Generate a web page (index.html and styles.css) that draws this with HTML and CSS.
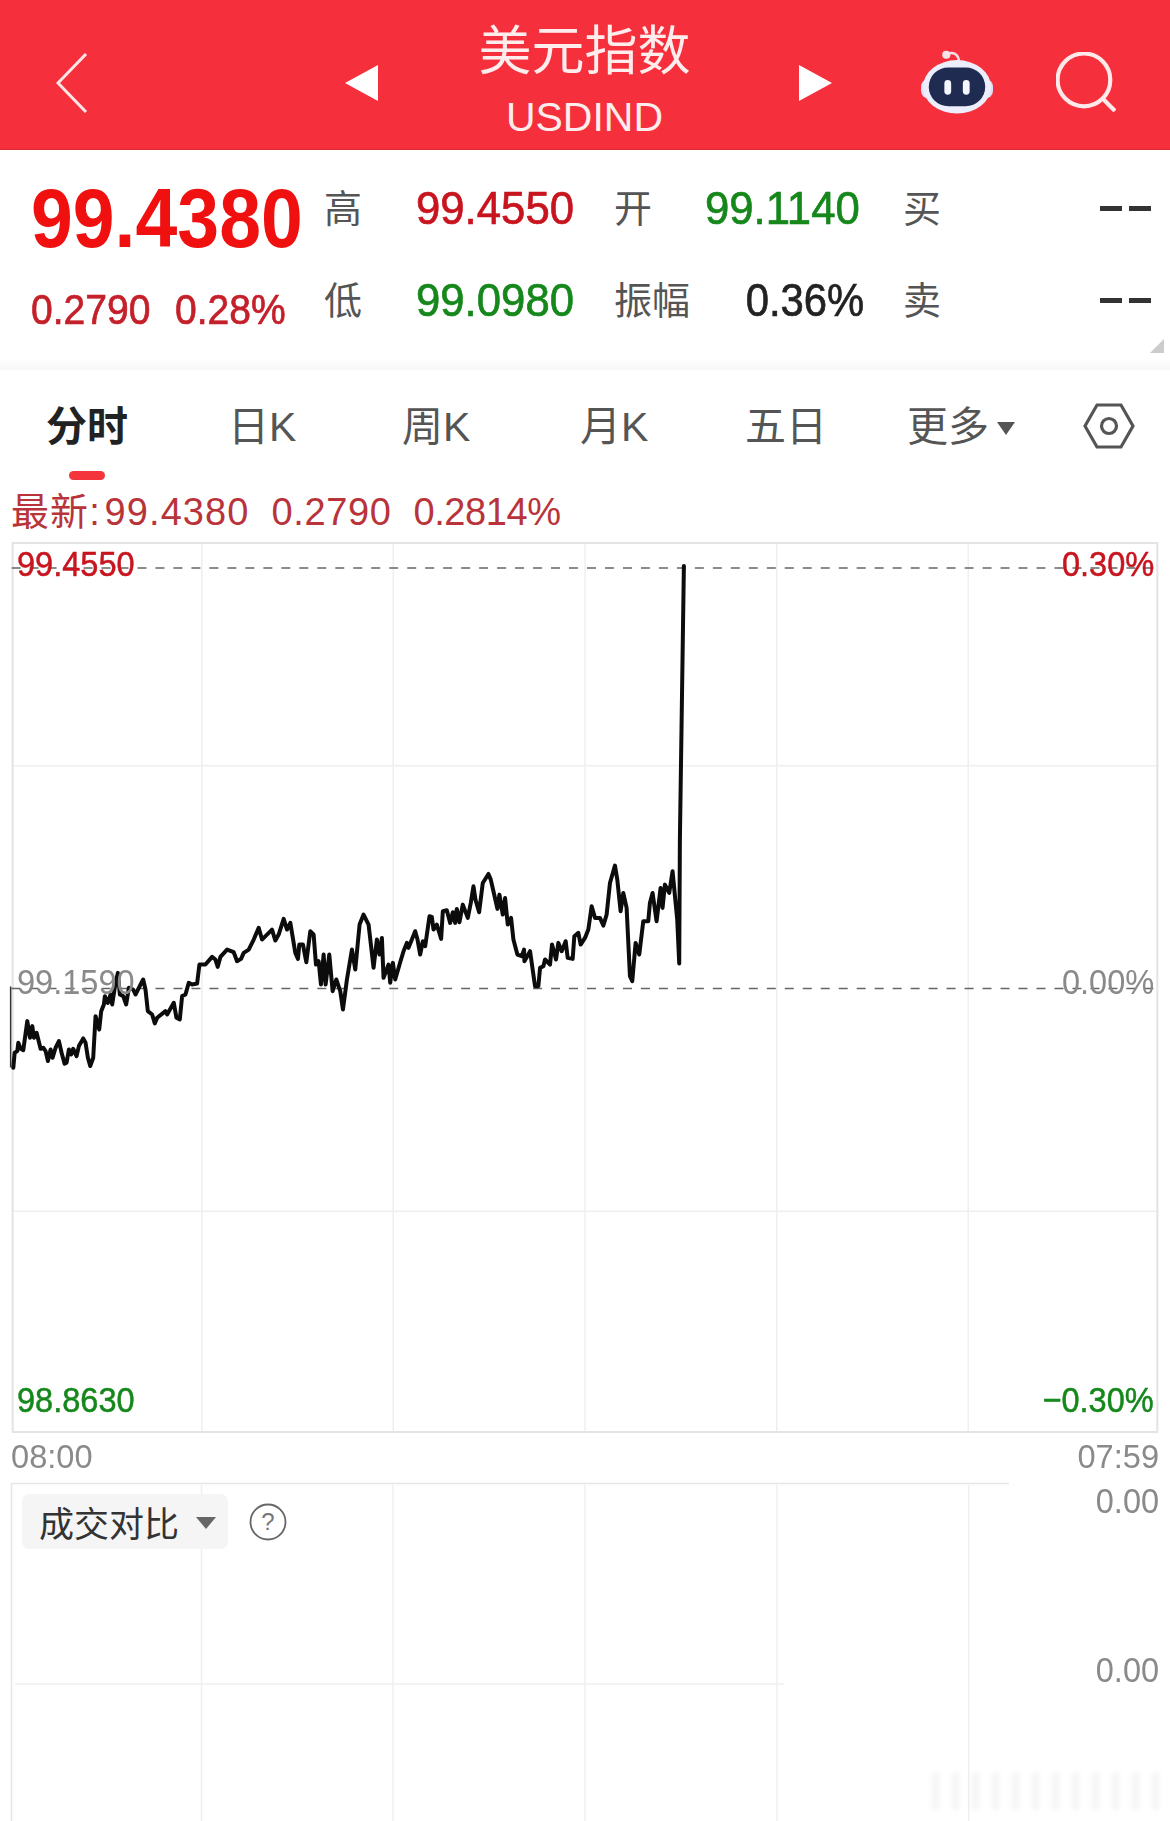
FILE: index.html
```html
<!DOCTYPE html>
<html lang="zh-CN">
<head>
<meta charset="utf-8">
<title>美元指数 USDIND</title>
<link rel="stylesheet" href="styles.css">
</head>
<body>
<div class="page">
  <header class="topbar">
    <svg class="back" viewBox="0 0 32 60"><path d="M30 1 2 30l28 29" /></svg>
    <span class="tri tri-l"></span>
    <div class="title">
      <div class="title-cn">美元指数</div>
      <div class="title-en">USDIND</div>
    </div>
    <span class="tri tri-r"></span>
    <svg class="robot" viewBox="0 0 74 66">
      <path class="robot-ant" d="M27 4c6-2 11 0 12 7"/>
      <circle class="robot-ball" cx="26" cy="5" r="4.2"/>
      <rect class="robot-ear" x="0" y="30" width="74" height="20" rx="8"/>
      <ellipse class="robot-head" cx="37" cy="38" rx="35" ry="27.5"/>
      <rect class="robot-face" x="8" y="18" width="58" height="40" rx="20"/>
      <rect class="robot-eye" x="24" y="31" width="7" height="15" rx="3.5"/>
      <rect class="robot-eye" x="43" y="31" width="7" height="15" rx="3.5"/>
    </svg>
    <svg class="search" viewBox="0 0 58 58"><circle cx="27" cy="27" r="25.5"/><path d="M46 46l11 11"/></svg>
  </header>

  <section class="quote">
    <div class="quote-main">
      <div class="price"><span class="cond-price">99.4380</span></div>
      <div class="change"><span class="cond-chg chg-a">0.2790</span><span class="cond-chg">0.28%</span></div>
    </div>
    <div class="quote-grid">
      <span class="q-lab">高</span><span class="q-val up"><span class="cond">99.4550</span></span>
      <span class="q-lab">开</span><span class="q-val down"><span class="cond">99.1140</span></span>
      <span class="q-lab">买</span><span class="q-dash"><i></i><i></i></span>
      <span class="q-lab">低</span><span class="q-val down"><span class="cond">99.0980</span></span>
      <span class="q-lab">振幅</span><span class="q-val dark q-amp"><span class="cond cond-r">0.36%</span></span>
      <span class="q-lab">卖</span><span class="q-dash"><i></i><i></i></span>
    </div>
    <span class="corner"></span>
  </section>
  <div class="stripe"></div>

  <nav class="tabs">
    <div class="tab tab-on">分时<span class="tab-bar"></span></div>
    <div class="tab">日K</div>
    <div class="tab">周K</div>
    <div class="tab">月K</div>
    <div class="tab">五日</div>
    <div class="tab tab-more">更多<span class="more-arrow"></span></div>
    <svg class="hex" viewBox="0 0 52 46"><path d="M14 2h24l12 21-12 21H14L2 23z"/><circle cx="26" cy="23" r="7.5"/></svg>
  </nav>

  <div class="latest"><span class="latest-a">最新: 99.4380</span><span>0.2790</span><span class="latest-c">0.2814%</span></div>

  <div class="chart">
    <svg class="chart-svg" viewBox="11 542 1148 892">
      <g class="grid">
        <path d="M201.5 542V1433M393 542V1433M585 542V1433M777 542V1433M968.7 542V1433"/>
        <path d="M11 766H1159M11 1212H1159"/>
      </g>
      <rect class="frame" x="12" y="543" width="1146" height="890"/>
      <path class="dash" d="M11 568H1159M11 989H1159"/>
      <path class="open-tick" d="M10 987V1068"/>
      <g transform="translate(0 840) scale(.33333)">
        <polyline class="price-line" points="38,685 42,640 50,635 53,610 60,628 68,632 80,545 88,595 95,560 100,595 108,580 120,628 128,625 135,635 142,665 150,630 156,655 165,625 175,605 183,640 192,673 198,670 205,630 212,645 218,628 228,650 235,620 248,597 255,610 262,655 269,680 278,655 285,530 296,570 302,515 310,495 313,470 322,490 330,465 335,495 345,430 352,400 358,465 368,470 377,495 385,445 398,450 405,465 415,445 428,420 435,450 442,515 455,525 463,552 470,535 495,515 500,525 520,490 528,535 538,540 545,470 555,465 565,430 575,435 590,432 597,375 615,375 635,352 645,360 652,382 660,352 680,330 700,338 710,365 722,358 730,340 745,330 760,300 775,265 785,300 800,285 815,270 825,303 835,285 850,238 860,270 870,250 885,340 893,358 897,315 908,315 918,368 930,275 940,285 947,375 955,365 962,435 970,345 976,435 987,345 997,455 1008,420 1020,455 1028,510 1040,420 1055,330 1065,390 1078,255 1090,225 1105,255 1120,385 1130,300 1138,345 1145,295 1150,415 1165,375 1170,430 1178,370 1185,420 1200,368 1210,335 1220,310 1225,325 1235,300 1245,275 1252,300 1260,345 1268,305 1275,320 1288,230 1295,232 1300,270 1310,255 1323,298 1328,215 1340,212 1350,250 1358,218 1365,250 1370,208 1378,248 1388,195 1403,235 1412,190 1420,140 1426,180 1437,218 1448,130 1465,103 1472,120 1480,155 1492,208 1498,165 1508,225 1515,175 1523,255 1533,235 1540,300 1552,345 1565,350 1572,330 1573,365 1590,335 1605,440 1615,440 1620,385 1630,380 1635,360 1650,375 1656,315 1668,360 1675,310 1685,335 1697,305 1703,355 1718,358 1723,290 1735,280 1742,315 1755,295 1765,270 1775,200 1785,235 1800,235 1810,258 1820,225 1830,130 1845,78 1852,120 1862,215 1870,160 1880,205 1890,410 1897,425 1907,310 1918,345 1930,245 1945,245 1950,190 1958,160 1970,245 1982,145 1988,205 1995,135 2008,160 2018,95 2032,240 2038,372 2040,0 2052,-822"/>
      </g>
    </svg>
    <span class="lab lab-l lab-top up"><span class="cond">99.4550</span></span>
    <span class="lab lab-r lab-top up"><span class="cond cond-r">0.30%</span></span>
    <span class="lab lab-l lab-mid gray"><span class="cond">99.1590</span></span>
    <span class="lab lab-r lab-mid gray"><span class="cond cond-r">0.00%</span></span>
    <span class="lab lab-l lab-bot down"><span class="cond">98.8630</span></span>
    <span class="lab lab-r lab-bot down"><span class="cond cond-r">−0.30%</span></span>
  </div>

  <div class="axis"><span class="cond-axis">08:00</span><span class="cond-axis cond-r">07:59</span></div>

  <div class="volume">
    <svg class="chart-svg" viewBox="11 1483 1148 338">
      <g class="grid">
        <path d="M201.5 1485V1821M393 1485V1821M585 1485V1821M777 1485V1821M968.7 1485V1821"/>
        <path d="M15 1684H784"/>
      </g>
      <path class="frame-open" d="M1009 1483.5H11.5V1821"/>
    </svg>
    <div class="vol-head">
      <div class="pill">成交对比<span class="pill-arrow"></span></div>
      <svg class="help" viewBox="0 0 38 38"><circle cx="19" cy="19" r="17.5"/><text x="19" y="27" text-anchor="middle">?</text></svg>
    </div>
    <span class="lab lab-r vol-a gray"><span class="cond cond-r">0.00</span></span>
    <span class="lab lab-r vol-b gray"><span class="cond cond-r">0.00</span></span>
    <div class="mark"></div>
  </div>
</div>
</body>
</html>
```

FILE: styles.css
```css
* { box-sizing: border-box; }
html, body { margin: 0; padding: 0; background: #fff; }
body { font-family: "Liberation Sans", "Noto Sans CJK SC", sans-serif; }
.page { width: 1170px; height: 1821px; overflow: hidden; }

.topbar { height: 150px; background: #f5303c; border-bottom: 1px solid #d92a36; display: flex; align-items: center; padding-left: 56px; color: #fff; }
.back { width: 32px; height: 60px; margin-top: 16px; fill: none; stroke: #fde6e6; stroke-width: 3; }
.tri { width: 0; height: 0; border-top: 18.5px solid transparent; border-bottom: 18.5px solid transparent; margin-top: 16px; }
.tri-l { margin-left: 257px; border-right: 33px solid #fff; }
.tri-r { margin-left: 8px; border-left: 33px solid #fff; }
.title { width: 413px; text-align: center; align-self: flex-start; }
.title-cn { font-size: 53px; line-height: 60px; margin-top: 22px; color: #ffecec; white-space: nowrap; }
.title-en { font-size: 41px; line-height: 46px; margin-top: 12px; color: #ffecec; }
.robot { width: 72px; height: 66px; margin-left: 89px; margin-top: 14px; }
.robot-ant { fill: none; stroke: #f3dfe6; stroke-width: 2.5; }
.robot-ball { fill: #f6e4ea; }
.robot-ear { fill: #dfe2f6; }
.robot-head { fill: #eceefb; }
.robot-face { fill: #1f2b50; }
.robot-eye { fill: #f4f5ff; }
.search { width: 60px; height: 60px; margin-left: 63px; margin-top: 14px; fill: none; stroke: #ffe9ea; stroke-width: 4; }

.quote { height: 210px; position: relative; display: flex; }
.quote-main { width: 324px; padding: 24px 0 0 31px; flex: none; }
.price { font-size: 84px; line-height: 88px; font-weight: 700; color: #f01010; white-space: nowrap; }
.cond-price { display: inline-block; transform: scaleX(.895); transform-origin: left center; }
.change { font-size: 42px; line-height: 48px; margin-top: 24px; color: #c4202a; -webkit-text-stroke: .7px #c4202a; white-space: nowrap; display: flex; }
.cond-chg { display: inline-block; transform: scaleX(.93); transform-origin: left center; }
.chg-a { width: 144px; }
.quote-grid { display: grid; grid-template-columns: 92px 198px 91px 198px 196px 1fr; grid-template-rows: 92px 92px; margin-top: 12px; align-items: center; flex: 1; padding-right: 19px; }
.q-lab { font-size: 38px; line-height: 44px; color: #555; position: relative; top: 1px; }
.q-val { font-size: 47px; line-height: 52px; -webkit-text-stroke: .7px currentColor; white-space: nowrap; }
.q-amp { width: 133px; margin-left: 26px; text-align: right; }
.q-amp .cond { transform: scaleX(.89); }
.q-dash { display: flex; justify-content: flex-end; gap: 7px; }
.q-dash i { display: block; width: 22px; height: 5px; background: #333; }
.cond { display: inline-block; transform: scaleX(.93); transform-origin: left center; }
.cond-r { transform-origin: right center; }
.cond-axis { display: inline-block; transform: scaleX(.96); transform-origin: left center; }
.cond-axis.cond-r { transform-origin: right center; }
.up { color: #c8141e; }
.down { color: #15871b; }
.dark { color: #222; }
.gray { color: #8a8a8a; }
.corner { position: absolute; right: 6px; bottom: 7px; width: 0; height: 0; border-left: 14px solid transparent; border-bottom: 14px solid #ccc; }
.stripe { height: 10px; background: linear-gradient(#fdfdfd, #f8f8f8); }

.tabs { height: 120px; display: grid; grid-template-columns: 182px 174px 178px 165px 162px 176px 1fr; padding: 30px 0 0 46px; align-items: start; }
.tab { font-size: 41px; line-height: 54px; color: #555; width: max-content; display: flex; flex-direction: column; align-items: center; }
.tab-on { color: #222; font-weight: 700; display: flex; }
.tab-bar { display: block; width: 36px; height: 9px; margin-top: 17px; border-radius: 5px; background: #f5353c; }
.tab-more { flex-direction: row; }
.more-arrow { width: 0; height: 0; margin: 2px 0 0 8px; border-left: 9.5px solid transparent; border-right: 9.5px solid transparent; border-top: 13px solid #555; }
.hex { width: 52px; height: 46px; margin: 3px 0 0 0; fill: none; stroke: #555; stroke-width: 3.2; }

.latest { height: 52px; padding-left: 11px; display: flex; gap: 22px; font-size: 38px; letter-spacing: .6px; word-spacing: -8px; line-height: 44px; color: #b8343a; white-space: nowrap; align-items: flex-start; }
.latest-a { letter-spacing: 1.1px; }
.latest-c { letter-spacing: -.4px; }

.chart { position: relative; height: 891px; margin: 0 11px; }
.chart-svg { display: block; width: 100%; height: 100%; position: absolute; left: 0; top: 0; overflow: visible; }
.grid path { fill: none; stroke: #efefef; stroke-width: 1.5; }
.frame { fill: none; stroke: #e4e4e4; stroke-width: 2; }
.dash { fill: none; stroke: #666; stroke-width: 1.5; stroke-dasharray: 9 9; }
.open-tick { fill: none; stroke: #333; stroke-width: 1.5; }
.price-line { fill: none; stroke: #0c0c0c; stroke-width: 12; stroke-linejoin: round; stroke-linecap: round; }
.lab { position: absolute; font-size: 35px; line-height: 40px; white-space: nowrap; }
.lab-l { left: 6px; }
.lab-r { right: 5px; text-align: right; }
.lab-top { top: 2px; -webkit-text-stroke: .5px currentColor; }
.lab-mid { top: 420px; }
.lab-bot { top: 838px; -webkit-text-stroke: .5px currentColor; }

.axis { height: 50px; display: flex; justify-content: space-between; padding: 3px 11px 0; font-size: 34px; line-height: 40px; color: #8a8a8a; }

.volume { position: relative; height: 338px; margin: 0 11px; }
.frame-open { fill: none; stroke: #e6e6e6; stroke-width: 1.5; }
.vol-head { position: absolute; left: 11px; top: 11px; display: flex; align-items: center; gap: 21px; }
.pill { height: 55px; width: 206px; padding-left: 17px; background: #f5f5f5; border-radius: 7px; display: flex; align-items: center; font-size: 35px; color: #333; white-space: nowrap; }
.pill-arrow { width: 0; height: 0; margin: 2px 0 0 17px; border-left: 10px solid transparent; border-right: 10px solid transparent; border-top: 12px solid #666; }
.help { width: 38px; height: 38px; fill: none; stroke: #666; stroke-width: 1.8; }
.help text { font-size: 24px; fill: #777; stroke: none; font-family: "Liberation Sans", sans-serif; }
.vol-a { top: -2px; right: 0; }
.vol-b { top: 167px; right: 0; }
.mark { position: absolute; right: 0; bottom: 11px; width: 227px; height: 37px; opacity: .3; filter: blur(2.5px); background: repeating-linear-gradient(90deg, #ddd 0 7px, transparent 7px 20px); }
```
